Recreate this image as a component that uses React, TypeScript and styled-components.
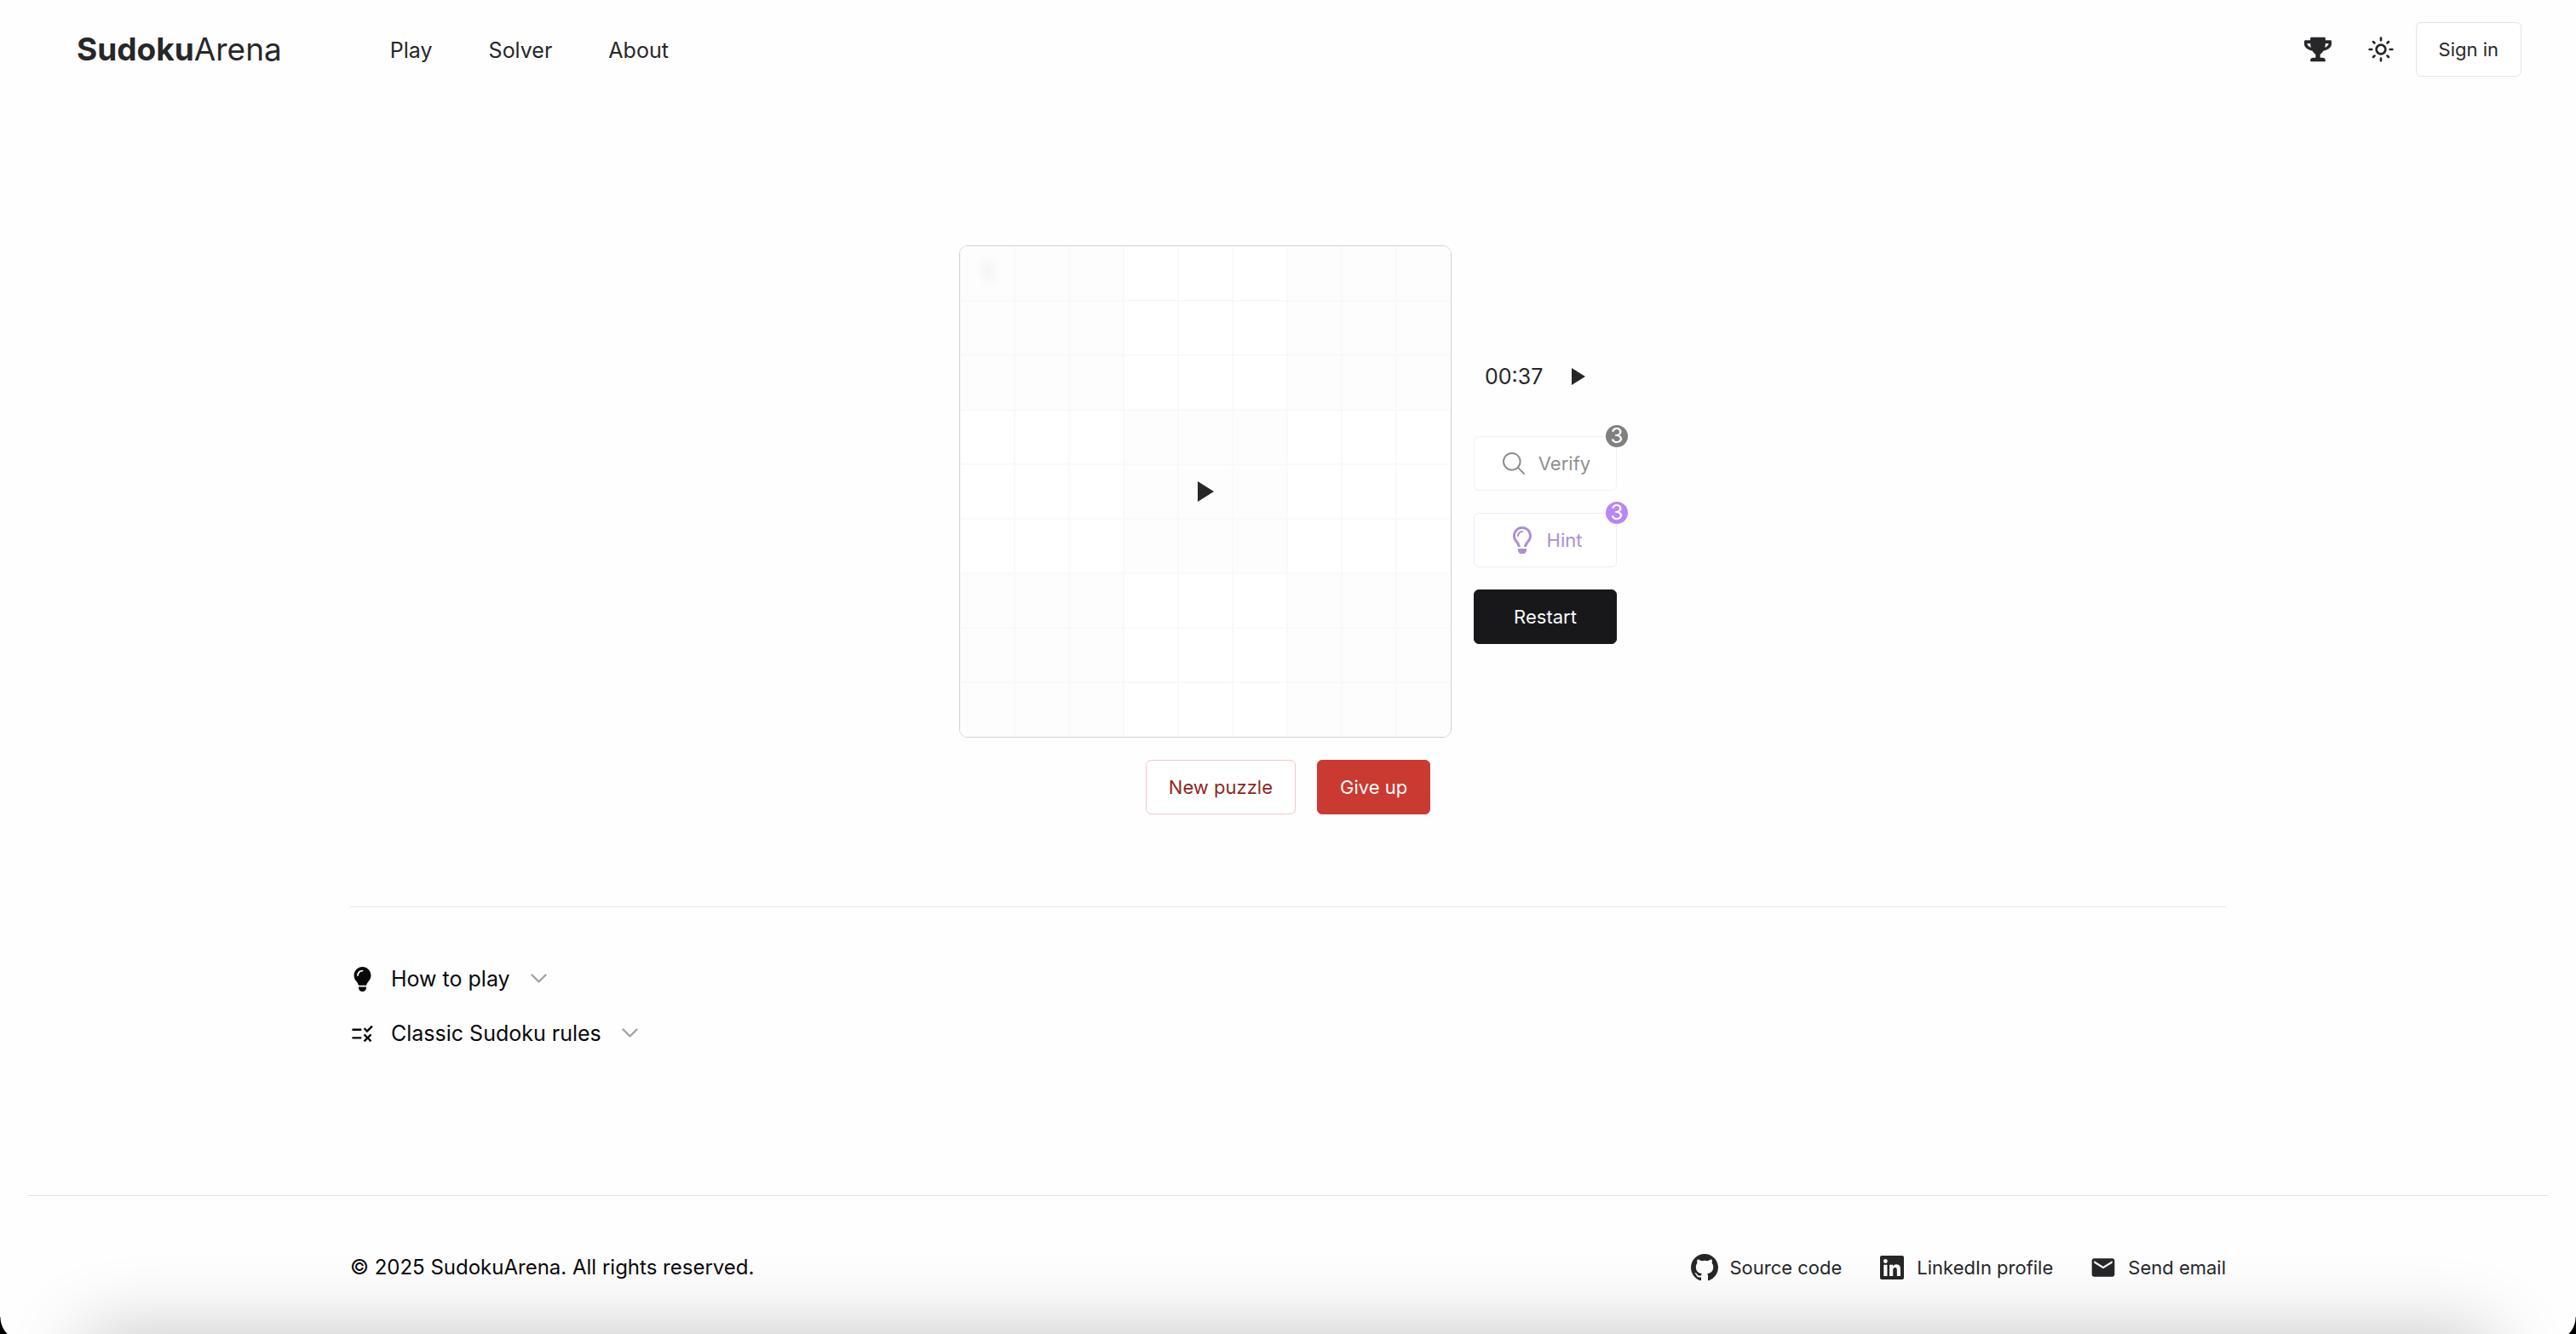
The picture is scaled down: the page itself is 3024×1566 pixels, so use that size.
import React from "react";
import styled, { createGlobalStyle } from "styled-components";
import { FaTrophy, FaRegLightbulb, FaLinkedin } from "react-icons/fa";
import { FaLightbulb } from "react-icons/fa6";
import { BsGithub } from "react-icons/bs";
import { MdRule, MdEmail, MdOutlineLightMode } from "react-icons/md";
import { IoSearchOutline } from "react-icons/io5";

const GlobalStyle = createGlobalStyle`
  *, *::before, *::after { box-sizing: border-box; }
  body {
    margin: 0;
    background: #fefefe;
    color: #09090b;
    font-family: Inter, "Liberation Sans", sans-serif;
    font-size: 24px;
    line-height: 38px;
  }
  button { font: inherit; color: inherit; cursor: pointer; }
  a { color: inherit; text-decoration: none; }
  svg { display: block; flex: none; }
`;

const Page = styled.div`
  min-height: 100vh;
  display: flex;
  flex-direction: column;
  overflow: hidden;
`;

const Header = styled.header`
  display: flex;
  align-items: center;
  justify-content: space-between;
  padding: 26px 64px 26px 90px;
  color: #27272a;
`;

const HeaderStart = styled.div`
  display: flex;
  align-items: center;
  gap: 127px;
`;

const Logo = styled.a`
  font-size: 37px;
  strong { font-weight: 700; }
`;

const Nav = styled.nav`
  display: flex;
  gap: 66px;
  padding-top: 2px;
  font-size: 25px;
`;

const HeaderEnd = styled.div`
  display: flex;
  align-items: center;
  gap: 17px;
`;

const IconGroup = styled.div`
  display: flex;
  gap: 26px;
`;

const IconButton = styled.button`
  display: flex;
  align-items: center;
  justify-content: center;
  width: 48px;
  height: 48px;
  padding: 0;
  border: 0;
  background: none;
`;

type Variant = "outline" | "muted" | "hint" | "dark" | "danger" | "dangerOutline";

const palette: Record<Variant, { bg: string; fg: string; line: string }> = {
  outline: { bg: "#ffffff", fg: "#27272a", line: "#e4e4e7" },
  muted: { bg: "#ffffff", fg: "#8f8f91", line: "#f0f0f1" },
  hint: { bg: "#ffffff", fg: "#ab90d1", line: "#f0e8fd" },
  dark: { bg: "#18181b", fg: "#fafafa", line: "#18181b" },
  danger: { bg: "#ca3a31", fg: "#fafafa", line: "#ca3a31" },
  dangerOutline: { bg: "#ffffff", fg: "#8f2820", line: "#f4c7c7" },
};

const Button = styled.button<{ $variant: Variant }>`
  position: relative;
  display: flex;
  align-items: center;
  justify-content: center;
  gap: 13px;
  height: 64px;
  padding: 0 26px;
  border: 1px solid ${(p) => palette[p.$variant].line};
  border-radius: 6px;
  background: ${(p) => palette[p.$variant].bg};
  color: ${(p) => palette[p.$variant].fg};
  font-size: 22px;
`;

const Badge = styled.span<{ $color: string }>`
  position: absolute;
  top: -14px;
  right: -14px;
  width: 26px;
  height: 26px;
  border-radius: 50%;
  background: ${(p) => p.$color};
  color: #fff;
  font-size: 24px;
  line-height: 26px;
  text-align: center;
`;

const Main = styled.main`
  padding: 172px 32px 171px;
`;

const Game = styled.section`
  display: flex;
  flex-direction: column;
  align-items: center;
  gap: 26px;
`;

const Play = styled.div`
  display: flex;
  align-items: center;
  gap: 26px;
`;

const Board = styled.div`
  position: relative;
  display: grid;
  grid-template-columns: repeat(9, 64px);
  grid-auto-rows: 64px;
  border: 1px solid #d4d4d6;
  border-radius: 10px;
  overflow: hidden;
`;

const Cell = styled.div<{ $shaded: boolean }>`
  display: flex;
  align-items: center;
  justify-content: center;
  border: 1px solid #f9f9f9;
  background: ${(p) => (p.$shaded ? "#fdfdfd" : "#ffffff")};
`;

const Blurred = styled.span`
  font-size: 32px;
  opacity: 0.15;
  filter: blur(7px);
`;

const Resume = styled.button`
  position: absolute;
  inset: 0;
  display: flex;
  align-items: center;
  justify-content: center;
  border: 0;
  background: none;
  color: #27272a;
`;

const Panel = styled.div`
  display: flex;
  flex-direction: column;
  gap: 26px;
  width: 168px;
  padding-top: 12px;
`;

const Timer = styled.div`
  display: flex;
  align-items: center;
  gap: 26px;
  height: 64px;
  margin-bottom: 12px;
  padding-left: 13px;
  color: #27272a;
  font-size: 25px;
`;

const TimerButton = styled(IconButton)`
  width: 32px;
  height: 32px;
`;

const Actions = styled.div`
  display: flex;
  justify-content: center;
  gap: 25px;
`;

const Help = styled.section`
  display: flex;
  flex-direction: column;
  align-items: flex-start;
  gap: 26px;
  max-width: 2202px;
  margin: 108px auto 0;
  padding-top: 65px;
  border-top: 1px solid #e4e4e7;
`;

const Disclosure = styled.button`
  display: flex;
  align-items: center;
  height: 38px;
  padding: 0;
  border: 0;
  background: none;
  color: #09090b;
  font-size: 25px;
`;

const DisclosureLabel = styled.span`
  padding: 0 24px 0 19px;
`;

const Footer = styled.footer`
  margin: 0 32px;
  padding: 65px 0 0;
  border-top: 1px solid #e4e4e7;
`;

const FooterRow = styled.div`
  display: flex;
  align-items: center;
  justify-content: space-between;
  max-width: 2202px;
  margin: 0 auto;
`;

const Copyright = styled.p`
  margin: 0;
  font-size: 24px;
`;

const Links = styled.div`
  display: flex;
  gap: 43px;
`;

const FooterLink = styled.a`
  display: flex;
  align-items: center;
  gap: 13px;
  color: #27272a;
  font-size: 22px;
`;

const BottomShade = styled.div`
  position: fixed;
  left: 100px;
  right: 100px;
  bottom: -240px;
  height: 240px;
  box-shadow: 0 0 90px rgba(0, 0, 0, 0.23);
  pointer-events: none;
`;

const Corner = styled.div<{ $side: "left" | "right" }>`
  position: fixed;
  bottom: 0;
  ${(p) => p.$side}: 0;
  width: 10px;
  height: 20px;
  background: radial-gradient(
    circle at ${(p) => (p.$side === "left" ? "29px" : "-19px")} 0,
    transparent 28px,
    #000 29px
  );
`;

const Triangle = ({ width, height }: { width: number; height: number }) => (
  <svg width={width} height={height} viewBox="0 0 16 20" preserveAspectRatio="none" aria-hidden="true">
    <path d="M0 0L16 10L0 20Z" fill="currentColor" />
  </svg>
);

const Chevron = () => (
  <svg width="19" height="12" viewBox="0 0 19 12" fill="none" aria-hidden="true">
    <path d="M1.5 1.5L9.5 9.5L17.5 1.5" stroke="#a1a1aa" strokeWidth="2.4" strokeLinecap="round" strokeLinejoin="round" />
  </svg>
);

const cells = Array.from({ length: 81 }, (_, i) => {
  const box = Math.floor(i / 27) + Math.floor((i % 9) / 3);
  return { id: i, shaded: box % 2 === 0 };
});

export default function App() {
  return (
    <Page>
      <GlobalStyle />
      <Header>
        <HeaderStart>
          <Logo href="#home"><strong>Sudoku</strong>Arena</Logo>
          <Nav>
            <a href="#play">Play</a>
            <a href="#solver">Solver</a>
            <a href="#about">About</a>
          </Nav>
        </HeaderStart>
        <HeaderEnd>
          <IconGroup>
            <IconButton aria-label="Leaderboard"><FaTrophy size={32} /></IconButton>
            <IconButton aria-label="Toggle theme"><MdOutlineLightMode size={32} /></IconButton>
          </IconGroup>
          <Button $variant="outline">Sign in</Button>
        </HeaderEnd>
      </Header>

      <Main>
        <Game>
          <Play>
            <Board>
              {cells.map((c) => (
                <Cell key={c.id} $shaded={c.shaded}>{c.id === 0 && <Blurred>1</Blurred>}</Cell>
              ))}
              <Resume aria-label="Resume"><Triangle width={19} height={24} /></Resume>
            </Board>
            <Panel>
              <Timer>
                <span>00:37</span>
                <TimerButton aria-label="Resume timer"><Triangle width={16} height={20} /></TimerButton>
              </Timer>
              <Button $variant="muted">
                <IoSearchOutline size={32} />Verify<Badge $color="#808080">3</Badge>
              </Button>
              <Button $variant="hint">
                <FaRegLightbulb size={32} />Hint<Badge $color="#b887f6">3</Badge>
              </Button>
              <Button $variant="dark">Restart</Button>
            </Panel>
          </Play>
          <Actions>
            <Button $variant="dangerOutline">New puzzle</Button>
            <Button $variant="danger">Give up</Button>
          </Actions>
        </Game>

        <Help>
          <Disclosure aria-expanded={false}>
            <FaLightbulb size={29} /><DisclosureLabel>How to play</DisclosureLabel><Chevron />
          </Disclosure>
          <Disclosure aria-expanded={false}>
            <MdRule size={29} /><DisclosureLabel>Classic Sudoku rules</DisclosureLabel><Chevron />
          </Disclosure>
        </Help>
      </Main>

      <Footer>
        <FooterRow>
          <Copyright>© 2025 SudokuArena. All rights reserved.</Copyright>
          <Links>
            <FooterLink href="#source"><BsGithub size={32} />Source code</FooterLink>
            <FooterLink href="#linkedin"><FaLinkedin size={32} />LinkedIn profile</FooterLink>
            <FooterLink href="#email"><MdEmail size={32} />Send email</FooterLink>
          </Links>
        </FooterRow>
      </Footer>
      <BottomShade />
      <Corner $side="left" />
      <Corner $side="right" />
    </Page>
  );
}
